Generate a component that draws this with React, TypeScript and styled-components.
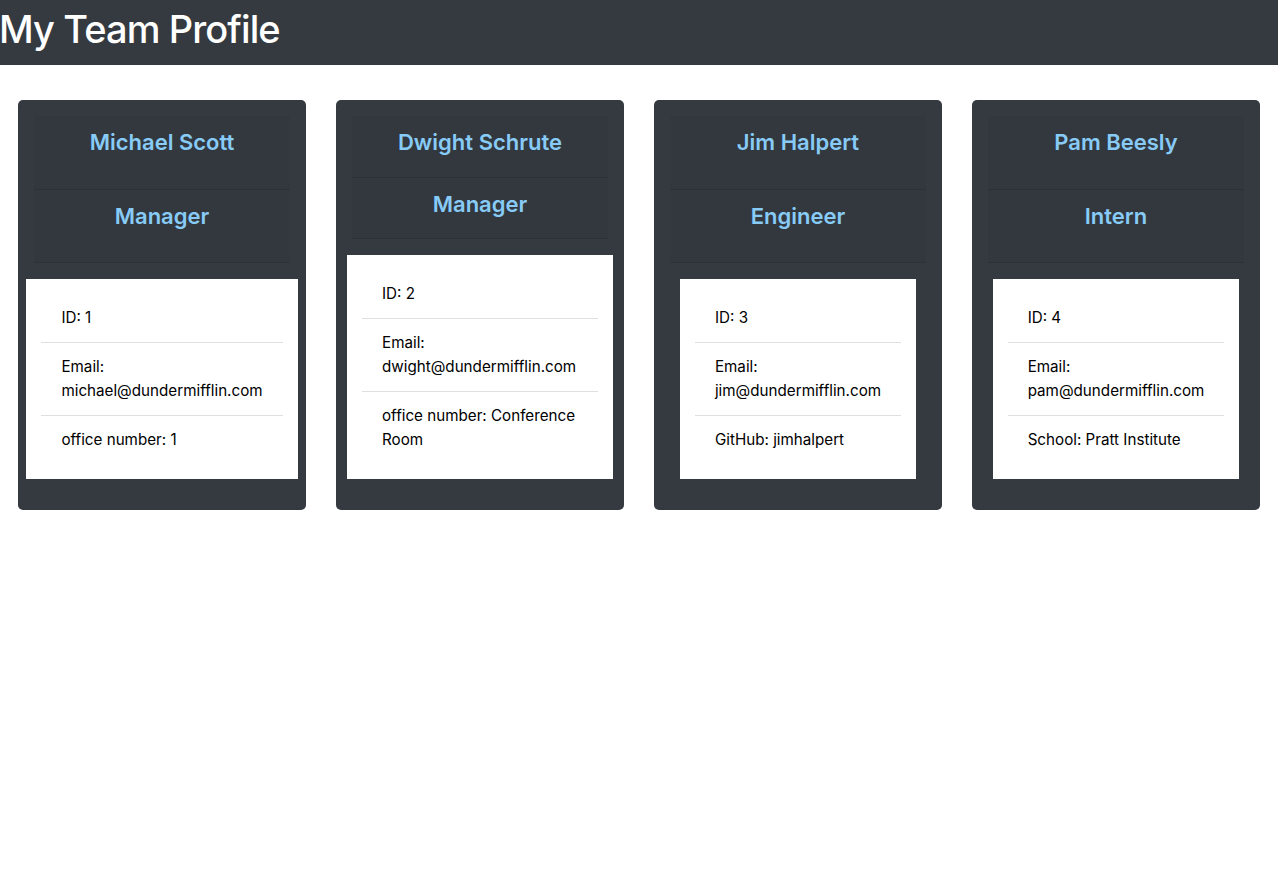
import React from "react";
import styled, { createGlobalStyle } from "styled-components";

const GlobalStyle = createGlobalStyle`
  body {
    margin: 0;
    background-color: #ffffff;
    font-family: Inter, "Liberation Sans", sans-serif;
    font-size: 16px;
    line-height: 1.5;
    color: #212529;
  }
  * {
    box-sizing: border-box;
  }
`;

const Header = styled.header`
  height: 65px;
  padding-top: 5px;
  background-color: #343a40;
`;

const HeaderTitle = styled.h1`
  margin: 0 0 0 -1px;
  font-size: 38px;
  font-weight: 500;
  line-height: 48px;
  color: #ffffff;
  letter-spacing: -0.9px;
`;

const Cards = styled.main`
  display: flex;
  gap: 30px;
  padding: 35px 18px;
`;

const Card = styled.div`
  flex: 1 1 0;
  min-width: 0;
  display: flex;
  flex-direction: column;
  padding: 16px 0 31px;
  border-radius: 5px;
  background-color: #343a40;
`;

const CardTop = styled.div`
  flex: 1 1 auto;
  display: flex;
  flex-direction: column;
  margin: 0 16px;
`;

const CardHeader = styled.div`
  flex: 1 1 auto;
  padding: 12px 20px;
  background-color: rgba(0, 0, 0, 0.03);
  border-bottom: 1px solid rgba(0, 0, 0, 0.125);
  text-align: center;
`;

const HeaderText = styled.h4`
  margin: 0 0 8px;
  font-size: 22px;
  font-weight: 600;
  line-height: 28.5px;
  color: #87cbf6;
`;

const CardBody = styled.div`
  display: flex;
  justify-content: center;
  margin-top: 16px;
  padding: 0 11px;
`;

const InfoList = styled.ul`
  flex: 0 1 auto;
  list-style: none;
  margin: 0;
  padding: 15px;
  background-color: #ffffff;
`;

const InfoItem = styled.li`
  padding: 12px 20px;
  font-size: 15.2px;
  line-height: 24px;
  color: #000000;
  & + & {
    border-top: 1px solid #dfdfdf;
  }
`;

type Member = {
  name: string;
  role: string;
  id: number;
  email: string;
  extra: string;
};

const team: Member[] = [
  {
    name: "Michael Scott",
    role: "Manager",
    id: 1,
    email: "michael@dundermifflin.com",
    extra: "office number: 1",
  },
  {
    name: "Dwight Schrute",
    role: "Manager",
    id: 2,
    email: "dwight@dundermifflin.com",
    extra: "office number: Conference Room",
  },
  {
    name: "Jim Halpert",
    role: "Engineer",
    id: 3,
    email: "jim@dundermifflin.com",
    extra: "GitHub: jimhalpert",
  },
  {
    name: "Pam Beesly",
    role: "Intern",
    id: 4,
    email: "pam@dundermifflin.com",
    extra: "School: Pratt Institute",
  },
];

const App: React.FC = () => {
  return (
    <>
      <GlobalStyle />
      <Header>
        <HeaderTitle>My Team Profile</HeaderTitle>
      </Header>
      <Cards>
        {team.map((m) => (
          <Card key={m.id}>
            <CardTop>
              <CardHeader>
                <HeaderText>{m.name}</HeaderText>
              </CardHeader>
              <CardHeader>
                <HeaderText>{m.role}</HeaderText>
              </CardHeader>
            </CardTop>
            <CardBody>
              <InfoList>
                <InfoItem>ID: {m.id}</InfoItem>
                <InfoItem>
                  Email:
                  <br />
                  {m.email}
                </InfoItem>
                <InfoItem>{m.extra}</InfoItem>
              </InfoList>
            </CardBody>
          </Card>
        ))}
      </Cards>
    </>
  );
};

export default App;
